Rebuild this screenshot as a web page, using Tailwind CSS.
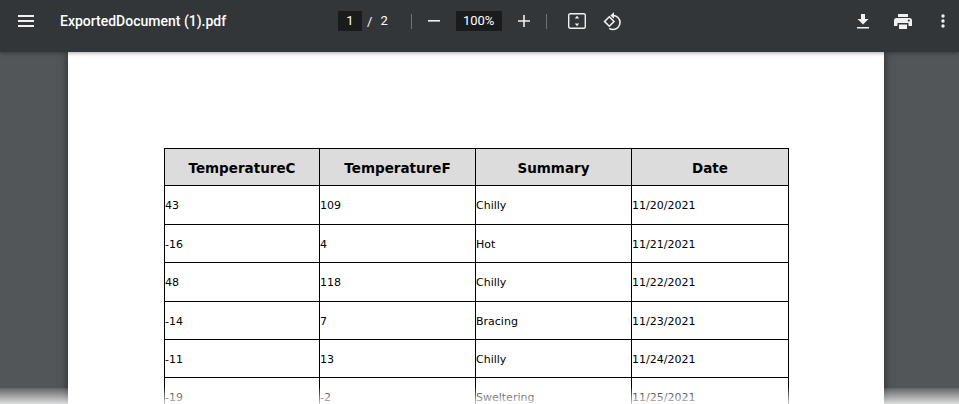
<!DOCTYPE html>
<html lang="en">
  <head>
    <meta charset="UTF-8" />
    <title>ExportedDocument (1).pdf</title>
    <script src="https://cdn.jsdelivr.net/npm/@tailwindcss/browser@4"></script>
  </head>
  <body class="bg-[#525659]">
    <div class="relative w-[959px] h-[404px] overflow-hidden bg-[#525659]">
      <!-- Toolbar -->
      <div class="relative z-10 h-[52px] pb-[10px] bg-[#323639] shadow-[0_1px_4px_rgba(0,0,0,0.35)] flex items-center text-white font-['Roboto',sans-serif]">
        <svg class="ml-[18px] w-4 h-3" viewBox="0 0 16 12" fill="#f1f1f1"><path d="M0 0h16v2H0zM0 5h16v2H0zM0 10h16v2H0z"/></svg>
        <div class="ml-[26px] w-[278px] text-[14px] font-medium leading-none pb-[1px]">ExportedDocument (1).pdf</div>
        <!-- Page controls -->
        <div class="w-6 h-5 bg-[#191b1c] text-[13px] flex items-center justify-center tracking-wide">1</div>
        <div class="ml-[5px] text-[13px] leading-none">/</div>
        <div class="ml-[8px] text-[13px] leading-none pb-[1px]">2</div>
        <div class="ml-[23px] w-px h-[15px] bg-[#6f7275]"></div>
        <svg class="ml-4 w-3 h-3" viewBox="0 0 12 12" fill="#f1f1f1"><path d="M0 5h12v1.6H0z"/></svg>
        <div class="ml-4 w-[46px] h-5 bg-[#191b1c] text-[13px] flex items-center justify-center">100%</div>
        <svg class="ml-4 w-3 h-3" viewBox="0 0 12 12" fill="#f1f1f1"><path d="M0 5.2h12v1.6H0zM5.2 0h1.6v12H5.2z"/></svg>
        <div class="ml-[16px] w-px h-[15px] bg-[#6f7275]"></div>
        <svg class="ml-[21px] w-[18px] h-4" viewBox="0 0 18 16" fill="none"><rect x="0.7" y="0.7" width="16.6" height="14.6" rx="1.5" stroke="#f1f1f1" stroke-width="1.4"/><path d="M9 2.800l2.200 2.600H6.800zM9 13.200l-2.200-2.600h4.400z" fill="#f1f1f1"/></svg>
        <svg class="ml-[17px] w-[19px] h-[19px]" viewBox="0 0 19 19" fill="none" stroke="#f1f1f1" stroke-width="1.6"><path d="M6.300 4.800l4.700 4.700-4.700 4.700-4.700-4.700z"/><path d="M9.500 3.500h.5a7 7 0 0 1 0 14c-1.500 0-2.800-.5-3.800-1.200"/><path d="M11 .3L7.300 3.500 11 6.700z" fill="#f1f1f1" stroke="none"/></svg>
        <!-- Right actions -->
        <svg class="ml-auto w-3 h-[15px]" viewBox="0 0 12 15" fill="#f1f1f1"><path d="M4 0h4v5h3.500L6 10.500.5 5H4zM0 13h12v1.600H0z"/></svg>
        <svg class="ml-[25px] w-[18px] h-[15px]" viewBox="0 0 18 15" fill="#f1f1f1"><path fill-rule="evenodd" d="M4 0h10v3H4zM2.500 4h13A2.500 2.500 0 0 1 18 6.500V12h-3.500V9h-11v3H0V6.500A2.500 2.500 0 0 1 2.500 4zM14.800 5.500a1 1 0 1 0 .01 0zM5 10.500h8V15H5z"/></svg>
        <svg class="ml-[29px] mr-[14px] w-1 h-[14px]" viewBox="0 0 4 14" fill="#f1f1f1"><circle cx="2" cy="2" r="1.700"/><circle cx="2" cy="7" r="1.700"/><circle cx="2" cy="12" r="1.700"/></svg>
      </div>

      <!-- Page sheet -->
      <div class="ml-[68px] w-[816px] h-[352px] bg-white pt-24 pl-24 shadow-[0_0_8px_rgba(0,0,0,0.55)] font-['DejaVu_Sans',sans-serif] text-black">
        <table class="w-[624px] table-fixed border-collapse text-[11px]">
          <thead>
            <tr class="h-[37px] bg-[#dcdcdc] text-[13.5px] font-bold">
              <th class="w-[155px] border border-black pt-[2px]">TemperatureC</th>
              <th class="w-[156px] border border-black pt-[2px]">TemperatureF</th>
              <th class="w-[156px] border border-black pt-[2px]">Summary</th>
              <th class="w-[157px] border border-black pt-[2px]">Date</th>
            </tr>
          </thead>
          <tbody>
            <tr class="h-[39px]"><td class="border border-black pt-[3px]">43</td><td class="border border-black pt-[3px]">109</td><td class="border border-black pt-[3px]">Chilly</td><td class="border border-black pt-[3px]">11/20/2021</td></tr>
            <tr class="h-[38px]"><td class="border border-black pt-[3px]">-16</td><td class="border border-black pt-[3px]">4</td><td class="border border-black pt-[3px]">Hot</td><td class="border border-black pt-[3px]">11/21/2021</td></tr>
            <tr class="h-[39px]"><td class="border border-black pt-[3px]">48</td><td class="border border-black pt-[3px]">118</td><td class="border border-black pt-[3px]">Chilly</td><td class="border border-black pt-[3px]">11/22/2021</td></tr>
            <tr class="h-[38px]"><td class="border border-black pt-[3px]">-14</td><td class="border border-black pt-[3px]">7</td><td class="border border-black pt-[3px]">Bracing</td><td class="border border-black pt-[3px]">11/23/2021</td></tr>
            <tr class="h-[38px]"><td class="border border-black pt-[3px]">-11</td><td class="border border-black pt-[3px]">13</td><td class="border border-black pt-[3px]">Chilly</td><td class="border border-black pt-[3px]">11/24/2021</td></tr>
            <tr class="h-[39px]"><td class="border border-black pt-[3px]">-19</td><td class="border border-black pt-[3px]">-2</td><td class="border border-black pt-[3px]">Sweltering</td><td class="border border-black pt-[3px]">11/25/2021</td></tr>
          </tbody>
        </table>
      </div>

      <!-- Bottom fade over the viewport -->
      <div class="absolute left-0 bottom-0 w-full h-4 bg-gradient-to-b from-white/10 to-white/80"></div>
    </div>
  </body>
</html>
